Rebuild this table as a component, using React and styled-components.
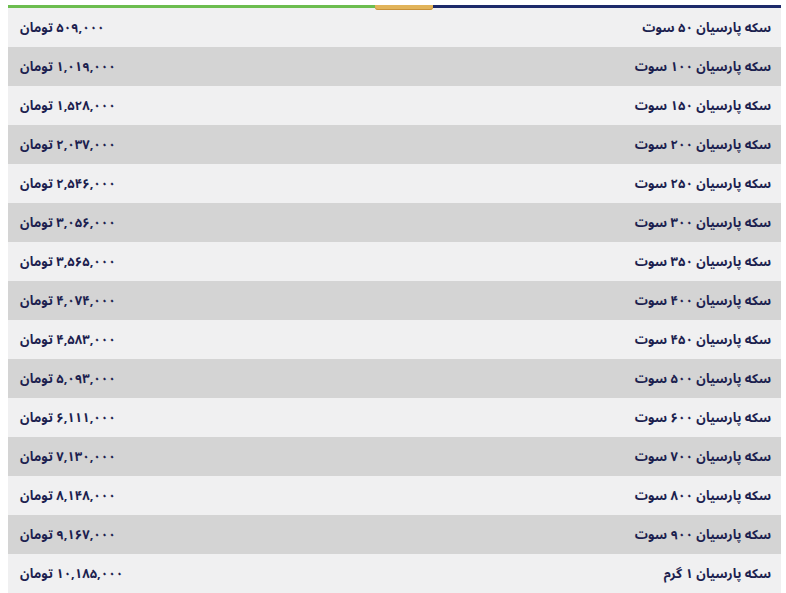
import React from "react";
import styled, { createGlobalStyle } from "styled-components";

const GlobalStyle = createGlobalStyle`
  html, body {
    margin: 0;
    padding: 0;
    background: #ffffff;
  }
`;

const Page = styled.div`
  padding: 5px 5px 0 8px;
  font-family: "Noto Sans Arabic", "Noto Naskh Arabic", "DejaVu Sans", "Noto Sans", sans-serif;
`;

const TopBar = styled.div`
  display: flex;
  align-items: flex-start;
  height: 3px;
`;

const BarPart = styled.div`
  height: ${(p) => (p.$tab ? "5px" : "3px")};
  flex: ${(p) => p.$grow || "none"};
  width: ${(p) => p.$width || "auto"};
  background: ${(p) => p.$color};
  border-radius: ${(p) => (p.$tab ? "0 0 3px 3px" : "0")};
  box-shadow: ${(p) => (p.$tab ? "inset 0 -1px 0 #c9923a" : "none")};
  position: relative;
  z-index: 1;
`;

const Table = styled.div`
  direction: rtl;
  display: flex;
  flex-direction: column;
`;

const Row = styled.div`
  display: flex;
  justify-content: space-between;
  align-items: center;
  height: 39px;
  padding: 0 10px 0 12px;
  background: ${(p) => (p.$dark ? "#d4d4d4" : "#f0f0f1")};
  color: #1c1f4f;
  font-weight: bold;
  font-size: 13px;
`;

const Cell = styled.span`
  white-space: nowrap;
`;

const rows = [
  ["سکه پارسیان ۵۰ سوت", "۵۰۹,۰۰۰"],
  ["سکه پارسیان ۱۰۰ سوت", "۱,۰۱۹,۰۰۰"],
  ["سکه پارسیان ۱۵۰ سوت", "۱,۵۲۸,۰۰۰"],
  ["سکه پارسیان ۲۰۰ سوت", "۲,۰۳۷,۰۰۰"],
  ["سکه پارسیان ۲۵۰ سوت", "۲,۵۴۶,۰۰۰"],
  ["سکه پارسیان ۳۰۰ سوت", "۳,۰۵۶,۰۰۰"],
  ["سکه پارسیان ۳۵۰ سوت", "۳,۵۶۵,۰۰۰"],
  ["سکه پارسیان ۴۰۰ سوت", "۴,۰۷۴,۰۰۰"],
  ["سکه پارسیان ۴۵۰ سوت", "۴,۵۸۳,۰۰۰"],
  ["سکه پارسیان ۵۰۰ سوت", "۵,۰۹۳,۰۰۰"],
  ["سکه پارسیان ۶۰۰ سوت", "۶,۱۱۱,۰۰۰"],
  ["سکه پارسیان ۷۰۰ سوت", "۷,۱۳۰,۰۰۰"],
  ["سکه پارسیان ۸۰۰ سوت", "۸,۱۴۸,۰۰۰"],
  ["سکه پارسیان ۹۰۰ سوت", "۹,۱۶۷,۰۰۰"],
  ["سکه پارسیان ۱ گرم", "۱۰,۱۸۵,۰۰۰"],
];

export default function App() {
  return (
    <Page>
      <GlobalStyle />
      <TopBar>
        <BarPart $grow="0 0 367px" $color="#6cbd4f" />
        <BarPart $tab $width="58px" $color="#e2b45a" />
        <BarPart $grow="1" $color="#1d2a6a" />
      </TopBar>
      <Table>
        {rows.map(([name, price], i) => (
          <Row key={name} $dark={i % 2 === 1}>
            <Cell>{name}</Cell>
            <Cell>{price} تومان</Cell>
          </Row>
        ))}
      </Table>
    </Page>
  );
}
